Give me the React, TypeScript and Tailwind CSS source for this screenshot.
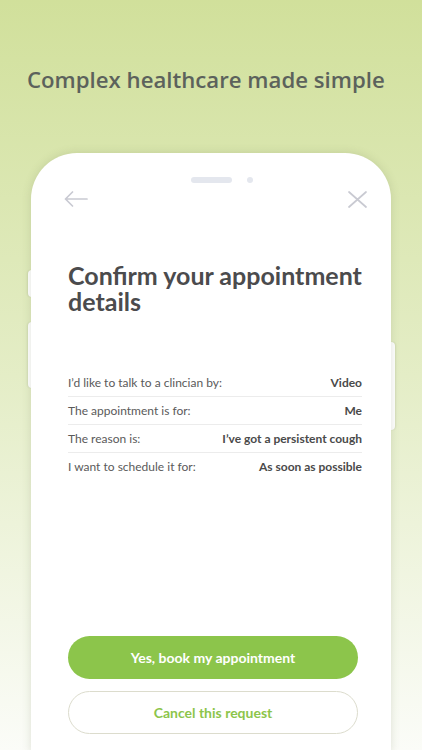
import React from "react";

const rows = [
  { label: "I’d like to talk to a clincian by:", value: "Video" },
  { label: "The appointment is for:", value: "Me" },
  { label: "The reason is:", value: "I’ve got a persistent cough" },
  { label: "I want to schedule it for:", value: "As soon as possible" },
];

export default function App() {
  return (
    <div className="w-[422px] h-[750px] overflow-hidden bg-gradient-to-b from-[#d1e09b] via-[#e4edc6] to-[#fbfcf8] font-['Open_Sans',sans-serif]">
      <h1 className="pt-[64px] pl-[27px] text-[22.2px] leading-[32px] font-semibold text-[#5c625c]">
        Complex healthcare made simple
      </h1>

      {/* phone */}
      <div className="relative mt-[57px] ml-[31px] w-[360px] h-[600px]">
        {/* side buttons */}
        <div className="absolute -left-[3px] top-[117px] w-[4px] h-[27px] bg-white rounded-l-sm shadow-[-1px_0_2px_rgba(0,0,0,0.08)]" />
        <div className="absolute -left-[3px] top-[169px] w-[4px] h-[66px] bg-white rounded-l-sm shadow-[-1px_0_2px_rgba(0,0,0,0.08)]" />
        <div className="absolute -right-[4px] top-[189px] w-[5px] h-[88px] bg-white rounded-r-sm shadow-[1px_0_2px_rgba(0,0,0,0.08)]" />

        <div className="relative h-full bg-white rounded-t-[46px] shadow-[0_0_10px_rgba(90,100,60,0.18)] pl-[37px] pr-[29px]">
          <div className="flex justify-center items-center gap-[15px] pt-[24px] ml-[14px]">
            <div className="w-[41px] h-[6px] rounded-full bg-[#e4e7ee]" />
            <div className="w-[6px] h-[6px] rounded-full bg-[#e4e7ee]" />
          </div>

          <div className="flex justify-between items-center h-[26px] -ml-[4px] -mr-[5px] mt-[3px]">
            <svg width="24" height="16" viewBox="0 0 24 16" fill="none" stroke="#c9cad2" strokeWidth="1.7" strokeLinecap="round" strokeLinejoin="round">
              <path d="M23 8H1.5M8.5 1 1.5 8l7 7" />
            </svg>
            <svg width="19" height="17" viewBox="0 0 19 17" fill="none" stroke="#c9cad2" strokeWidth="1.7" strokeLinecap="round">
              <path d="M1 1l17 15M18 1 1 16" />
            </svg>
          </div>

          <h2 className="mt-[50px] text-[25px] leading-[26px] font-bold text-[#4b4b4d] font-['Lato',sans-serif]">
            Confirm your appointment details
          </h2>

          <div className="mt-[55px] font-['Lato',sans-serif] text-[12px]">
            {rows.map((r, i) => (
              <div
                key={r.label}
                className={
                  "flex justify-between items-center h-[28px] " +
                  (i < rows.length - 1 ? "border-b border-[#ececec]" : "")
                }
              >
                <span className="text-[#5a5a5a]">{r.label}</span>
                <span className="font-bold text-[#4a4a4a]">{r.value}</span>
              </div>
            ))}
          </div>

          <div className="mt-[155px] mr-[4px] flex flex-col gap-[12px] font-['Lato',sans-serif]">
            <button className="h-[43px] rounded-full bg-[#8cc54b] text-white text-[14px] font-bold">
              Yes, book my appointment
            </button>
            <button className="h-[43px] rounded-full border border-[#dcdccd] bg-white text-[#8cc54b] text-[14px] font-bold">
              Cancel this request
            </button>
          </div>
        </div>
      </div>
    </div>
  );
}
